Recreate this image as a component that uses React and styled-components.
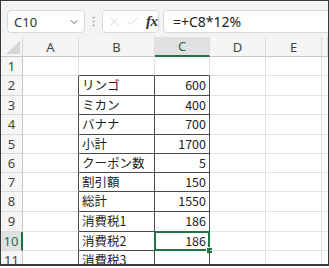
import styled, { createGlobalStyle, css } from "styled-components";
import { ChevronDown, EllipsisVertical, X, Check } from "lucide-react";

const GREEN = "#217346";
const GRID = "#e1e1e1";
const DARK = "#4a4a4a";

const Global = createGlobalStyle`
  body { margin: 0; background: #fff; }
  * { box-sizing: border-box; }
`;

const COLS = "22px 56px 76px 55px 56px 56px 1fr";

// row height is the distance between bottom gridlines in the screenshot
const rows = [
  { n: 1, h: 19 },
  { n: 2, h: 20, label: "リンゴ", value: "600" },
  { n: 3, h: 19, label: "ミカン", value: "400" },
  { n: 4, h: 20, label: "バナナ", value: "700" },
  { n: 5, h: 19, label: "小計", value: "1700" },
  { n: 6, h: 19, label: "クーポン数", value: "5" },
  { n: 7, h: 19, label: "割引額", value: "150" },
  { n: 8, h: 20, label: "総計", value: "1550" },
  { n: 9, h: 20, label: "消費税1", value: "186" },
  { n: 10, h: 19, label: "消費税2", value: "186", selected: true },
  { n: 11, h: 19, label: "消費税3", value: "" },
];

export default function App() {
  return (
    <>
      <Global />
      <Frame>
        <Toolbar>
          <NameBox>
            C10
            <ChevronDown size={12} strokeWidth={1.6} color="#444" />
          </NameBox>
          <Grip>
            <EllipsisVertical size={13} strokeWidth={1.8} color="#a8a8a8" />
          </Grip>
          <FxBox>
            <X size={15} strokeWidth={1.1} color="#c4c4c4" />
            <Check size={15} strokeWidth={1.1} color="#c4c4c4" />
            <Fx>fx</Fx>
          </FxBox>
          <Formula>=+C8*12%</Formula>
        </Toolbar>

        <HeaderRow>
          <Corner />
          {["A", "B", "C", "D", "E", ""].map((c) => (
            <ColHead key={c || "rest"} $active={c === "C"}>
              {c}
            </ColHead>
          ))}
        </HeaderRow>

        {rows.map((r) => {
          const boxed = r.n >= 2;
          const aboveBox = r.n === 1;
          return (
            <Row key={r.n} $h={r.h}>
              <RowHead $active={r.selected}>{r.n}</RowHead>
              <Cell $right={boxed ? DARK : GRID} />
              <Cell
                $right={boxed ? DARK : GRID}
                $bottom={boxed || aboveBox ? DARK : GRID}
              >
                {r.label}
              </Cell>
              <Cell
                $num
                $right={boxed ? DARK : GRID}
                $bottom={boxed || aboveBox ? DARK : GRID}
              >
                {r.value}
                {r.selected && (
                  <Selection>
                    <Handle />
                  </Selection>
                )}
              </Cell>
              <Cell />
              <Cell />
              <Cell $right="transparent" />
            </Row>
          );
        })}
      </Frame>
    </>
  );
}

const Frame = styled.div`
  width: 329px;
  height: 266px;
  border: 1px solid #3a3a3a;
  border-bottom-width: 2px;
  overflow: hidden;
  background: #fff;
  font-family: "Noto Sans CJK JP", "Noto Sans", sans-serif;
`;

const Toolbar = styled.div`
  height: 36px;
  background: #f3f3f3;
  display: flex;
  align-items: flex-start;
  padding: 9px 0 0 6px;
`;

const boxStyle = css`
  height: 23px;
  background: #fff;
  border: 1px solid #d9d9d9;
  border-radius: 4px;
  display: flex;
  align-items: center;
`;

const NameBox = styled.div`
  ${boxStyle};
  width: 78px;
  padding: 0 4px 0 6px;
  justify-content: space-between;
  font-family: "Noto Sans", sans-serif;
  font-size: 13px;
  color: #333;
`;

const Grip = styled.div`
  width: 17px;
  height: 23px;
  display: flex;
  align-items: center;
  justify-content: center;
`;

const FxBox = styled.div`
  ${boxStyle};
  width: 57px;
  margin-right: 4px;
  padding-left: 4px;
  gap: 3px;
`;

const Fx = styled.span`
  font-family: "Liberation Serif", "DejaVu Serif", serif;
  font-style: italic;
  font-weight: bold;
  font-size: 15px;
  color: #333;
  margin-left: 3px;
  letter-spacing: -0.5px;
`;

const Formula = styled.div`
  ${boxStyle};
  flex: 1;
  margin-right: -12px;
  padding-left: 9px;
  font-family: "Noto Sans", sans-serif;
  font-size: 14px;
  color: #222;
`;

const HeaderRow = styled.div`
  display: grid;
  grid-template-columns: ${COLS};
  height: 20px;
  background: #f5f5f5;
`;

const Corner = styled.div`
  position: relative;
  border-right: 1px solid #d4d4d4;
  border-bottom: 1px solid #c8c8c8;
  &::after {
    content: "";
    position: absolute;
    right: 2px;
    bottom: 2px;
    width: 14px;
    height: 13px;
    background: #d6d6d6;
    clip-path: polygon(100% 0, 100% 100%, 0 100%);
  }
`;

const ColHead = styled.div`
  display: flex;
  align-items: center;
  justify-content: center;
  font-family: "Noto Sans", sans-serif;
  font-size: 13px;
  color: ${(p) => (p.$active ? GREEN : "#444")};
  background: ${(p) => (p.$active ? "#e1e1e1" : "transparent")};
  border-right: 1px solid #dadada;
  border-bottom: ${(p) => (p.$active ? `2px solid ${GREEN}` : "1px solid #c8c8c8")};
`;

const Row = styled.div`
  display: grid;
  grid-template-columns: ${COLS};
  height: ${(p) => p.$h}px;
`;

const RowHead = styled.div`
  display: flex;
  align-items: center;
  justify-content: center;
  background: ${(p) => (p.$active ? "#e1e1e1" : "#f5f5f5")};
  font-family: "Noto Sans", sans-serif;
  font-size: 13px;
  line-height: 1;
  color: ${(p) => (p.$active ? GREEN : "#444")};
  border-right: ${(p) => (p.$active ? `2px solid ${GREEN}` : "1px solid #c8c8c8")};
  border-bottom: 1px solid #dadada;
`;

const Cell = styled.div`
  position: relative;
  display: flex;
  align-items: center;
  justify-content: ${(p) => (p.$num ? "flex-end" : "flex-start")};
  padding: 0 ${(p) => (p.$num ? "3px" : "0")} 0 ${(p) => (p.$num ? "0" : "3px")};
  font-size: 12.5px;
  line-height: 1;
  color: #222;
  white-space: nowrap;
  border-right: 1px solid ${(p) => p.$right || GRID};
  border-bottom: 1px solid ${(p) => p.$bottom || GRID};
`;

const Selection = styled.div`
  position: absolute;
  top: -1px;
  left: -1px;
  right: -1px;
  bottom: -1px;
  border: 2px solid ${GREEN};
`;

const Handle = styled.div`
  position: absolute;
  right: -5px;
  bottom: -5px;
  width: 7px;
  height: 7px;
  background: ${GREEN};
  border: 1px solid #fff;
`;
